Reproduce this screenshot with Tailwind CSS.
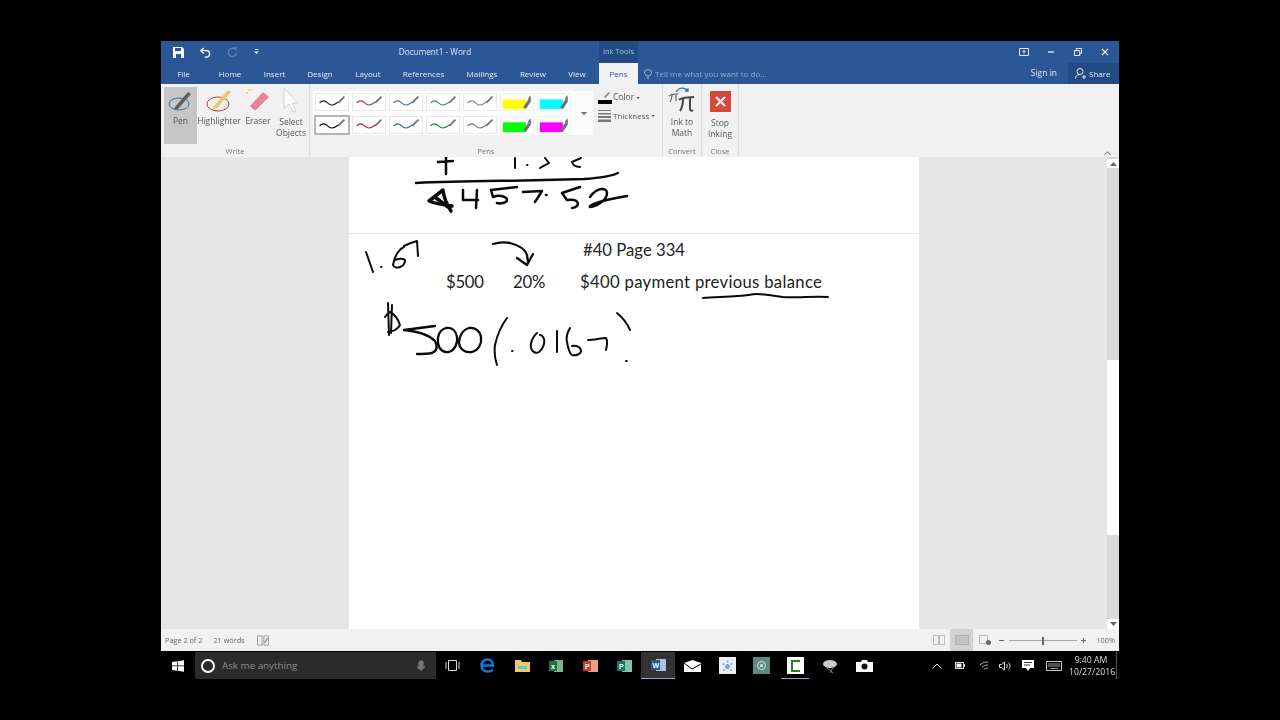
<!DOCTYPE html>
<html lang="en">
<head>
  <meta charset="UTF-8">
  <title>Document1 - Word</title>
  <script src="https://cdn.jsdelivr.net/npm/@tailwindcss/browser@4"></script>
</head>
<body class="bg-black overflow-hidden font-['Open_Sans',sans-serif]">
  <svg class="hidden">
    <symbol id="pen-line" viewBox="0 0 34 18">
      <path d="M3 10c3-3 6-3 9 0s6 3 9 1l3-2" fill="none" stroke="currentColor" stroke-width="1.3"/>
      <path d="M24 10l7-7" stroke="#707070" stroke-width="2" fill="none"/>
    </symbol>
    <symbol id="pen-marker" viewBox="0 0 34 18">
      <rect x="1" y="6" width="26" height="11" fill="currentColor"/>
      <path d="M24 15l6-9 3 2-6 9z" fill="#707070"/>
      <path d="M29 6l3-5 1 6z" fill="#707070"/>
    </symbol>
  </svg>

  <div class="w-[1280px] h-[720px] pl-[161px] pt-[41px]">
    <div class="w-[958px] blur-[0.3px]">

      <!-- title bar -->
      <div class="h-[22px] bg-[#2b5797] flex items-center text-[#dfe7f3] relative">
        <div class="flex items-center w-[110px] pl-[12px] gap-[16px]">
          <svg width="11" height="11" viewBox="0 0 11 11"><path d="M0 0h9l2 2v9H0z" fill="#fff"/><path d="M2 1h6v3H2zM3 7h5v4H3z" fill="#2b5797"/></svg>
          <svg width="11" height="11" viewBox="0 0 12 12" fill="none" stroke="#fff" stroke-width="1.5"><path d="M1 4h6a3.500 3.500 0 0 1 0 7H5"/><path d="M4 1L1 4l3 3"/></svg>
          <svg width="11" height="11" viewBox="0 0 12 12" fill="none" stroke="#5f83b8" stroke-width="1.4"><path d="M9 2.500a4.500 4.500 0 1 0 1.500 3.500"/><path d="M7 1h3v3"/></svg>
          <svg width="5" height="6" viewBox="0 0 6 7" fill="#dfe7f3"><path d="M1 0h4v1H1zM0 3h6L3 6z"/></svg>
        </div>
        <div class="ml-[94px] w-[140px] text-[8.2px] text-center">Document1 - Word</div>
        <div class="ml-[94px] w-[39px] h-[22px] bg-[#224a84] text-[7.5px] text-[#a9bcd8] flex items-center justify-center">Ink Tools</div>
        <div class="ml-auto flex items-center">
          <div class="w-[27px] flex justify-center"><svg width="10" height="8" viewBox="0 0 10 8" fill="none" stroke="#dfe7f3"><path d="M.5.5h9v7h-9z"/><path d="M5 6V2.500M3.500 4L5 2.500 6.500 4"/></svg></div>
          <div class="w-[27px] flex justify-center"><svg width="6" height="2"><path d="M0 1h6" stroke="#fff" stroke-width="1.2"/></svg></div>
          <div class="w-[27px] flex justify-center"><svg width="8" height="8" viewBox="0 0 9 9" fill="none" stroke="#fff"><path d="M.5 3h6v5.500h-6zM2.500 3V.5h6v5.500H6.500"/></svg></div>
          <div class="w-[28px] flex justify-center"><svg width="8" height="8" viewBox="0 0 9 9" stroke="#fff" stroke-width="1.5"><path d="M1 1l7 7M8 1L1 8"/></svg></div>
        </div>
      </div>

      <!-- tabs -->
      <div class="h-[21px] bg-[#2b5797] flex items-stretch text-[8px] text-[#e3eaf5]">
        <div class="w-[45px] flex items-center justify-center">File</div>
        <div class="w-[48px] flex items-center justify-center">Home</div>
        <div class="w-[41px] flex items-center justify-center">Insert</div>
        <div class="w-[50px] flex items-center justify-center">Design</div>
        <div class="w-[46px] flex items-center justify-center">Layout</div>
        <div class="w-[65px] flex items-center justify-center">References</div>
        <div class="w-[52px] flex items-center justify-center">Mailings</div>
        <div class="w-[50px] flex items-center justify-center">Review</div>
        <div class="w-[38px] flex items-center justify-center">View</div>
        <div class="w-[39px] ml-[3px] flex items-center justify-center bg-[#f1f1f1] text-[#2b5797]">Pens</div>
        <div class="flex items-center pl-[6px] text-[#8fa9d0] gap-[3px]">
          <svg width="8" height="10" viewBox="0 0 8 10" fill="none" stroke="#a9bcd8"><path d="M2.500 7C2 5.500.5 5 .5 3.500a3.500 3 0 0 1 7 0C7.500 5 6 5.500 5.500 7zM3 9h2"/></svg>
          <span>Tell me what you want to do...</span>
        </div>
        <div class="ml-auto flex items-center">
          <span class="mr-[11px] text-[8.5px]">Sign in</span>
          <div class="w-[51px] h-full bg-[#224a84] flex items-center pl-[7px] gap-[3px]">
            <svg width="11" height="11" viewBox="0 0 11 11" fill="none" stroke="#e3eaf5"><circle cx="5" cy="3.500" r="3"/><path d="M.5 10.500c0-2.500 2-4 4-4M7 9h4M9 7v4"/></svg>
            <span>Share</span>
          </div>
        </div>
      </div>

      <!-- ribbon -->
      <div class="h-[73px] bg-[#f1f1f1] flex text-[8.5px] text-[#555] relative">
        <!-- Write -->
        <div class="w-[149px] border-r border-[#dcdcdc] flex flex-col">
          <div class="flex h-[61px] pt-[3px] pl-[3px]">
            <div class="w-[33px] h-[57px] bg-[#c6c6c6] flex flex-col items-center">
              <svg width="28" height="24" viewBox="0 0 28 24" class="mt-[2px]" fill="none"><ellipse cx="12" cy="15" rx="10" ry="6" stroke="#3f6cb5"/><path d="M8 18L21 3l3 2-13 15-4 1z" fill="#5f5f5f"/></svg>
              <span class="mt-[2px]">Pen</span>
            </div>
            <div class="w-[44px] flex flex-col items-center">
              <svg width="28" height="26" viewBox="0 0 28 26" fill="none"><ellipse cx="13" cy="17" rx="11" ry="7" stroke="#c0392b"/><path d="M8 20L23 3l3 2-14 16-4 1z" fill="#ecc76f"/></svg>
              <span class="mt-[2px]">Highlighter</span>
            </div>
            <div class="w-[34px] flex flex-col items-center">
              <svg width="26" height="26" viewBox="0 0 26 26"><path d="M3 2l1 2M1 6h2M6 2v2" stroke="#e9b44c"/><path d="M5 19L18 5l6 5-13 13h-2z" fill="#e8829b"/></svg>
              <span class="mt-[2px]">Eraser</span>
            </div>
            <div class="w-[32px] flex flex-col items-center text-center leading-[11px]">
              <svg width="20" height="26" viewBox="0 0 20 26" fill="#fbfbfb" stroke="#c9c9c9" stroke-width=".8"><path d="M3 1l14 15h-6l4 8-3 1-4-8-5 4z"/></svg>
              <span class="mt-[3px]">Select Objects</span>
            </div>
          </div>
          <div class="text-center text-[7.5px] text-[#777] mt-[2px]">Write</div>
        </div>
        <!-- Pens -->
        <div class="w-[353px] border-r border-[#dcdcdc] flex flex-col">
          <div class="flex h-[61px] pt-[7px]">
            <div class="ml-[3px] w-[261px] h-[44px] bg-white grid grid-cols-[repeat(7,37px)] grid-rows-2 pl-[2px] pt-[2px] gap-y-[3px]">
              <div class="w-[34px] h-[18px] border border-[#e8e8e8] text-[#222]"><svg class="w-full h-full"><use href="#pen-line"/></svg></div>
              <div class="w-[34px] h-[18px] border border-[#e8e8e8] text-[#c8284d]"><svg class="w-full h-full"><use href="#pen-line"/></svg></div>
              <div class="w-[34px] h-[18px] border border-[#e8e8e8] text-[#4a70b8]"><svg class="w-full h-full"><use href="#pen-line"/></svg></div>
              <div class="w-[34px] h-[18px] border border-[#e8e8e8] text-[#2e9a50]"><svg class="w-full h-full"><use href="#pen-line"/></svg></div>
              <div class="w-[34px] h-[18px] border border-[#e8e8e8] text-[#888]"><svg class="w-full h-full"><use href="#pen-line"/></svg></div>
              <div class="w-[34px] h-[18px] border border-[#eeeeee] text-[#ffff00]"><svg class="w-full h-full"><use href="#pen-marker"/></svg></div>
              <div class="w-[34px] h-[18px] border border-[#eeeeee] text-[#00ffff]"><svg class="w-full h-full"><use href="#pen-marker"/></svg></div>
              <div class="w-[36px] h-[20px] -ml-[1px] -mt-[1px] border-2 border-[#b4b4b4] text-[#000]"><svg class="w-full h-full"><use href="#pen-line"/></svg></div>
              <div class="w-[34px] h-[18px] border border-[#e8e8e8] text-[#d01030]"><svg class="w-full h-full"><use href="#pen-line"/></svg></div>
              <div class="w-[34px] h-[18px] border border-[#e8e8e8] text-[#3060c0]"><svg class="w-full h-full"><use href="#pen-line"/></svg></div>
              <div class="w-[34px] h-[18px] border border-[#e8e8e8] text-[#108a40]"><svg class="w-full h-full"><use href="#pen-line"/></svg></div>
              <div class="w-[34px] h-[18px] border border-[#e8e8e8] text-[#777]"><svg class="w-full h-full"><use href="#pen-line"/></svg></div>
              <div class="w-[34px] h-[18px] border border-[#eeeeee] text-[#00ff00]"><svg class="w-full h-full"><use href="#pen-marker"/></svg></div>
              <div class="w-[34px] h-[18px] border border-[#eeeeee] text-[#ff00ff]"><svg class="w-full h-full"><use href="#pen-marker"/></svg></div>
            </div>
            <div class="w-[19px] h-[44px] bg-[#fbfbfb] flex items-center justify-center"><svg width="6" height="3"><path d="M0 0h6L3 3z" fill="#666"/></svg></div>
            <div class="ml-[5px] flex flex-col gap-[5px] text-[8.5px]">
              <div class="flex items-center h-[13px]">
                <svg width="14" height="13" viewBox="0 0 14 13"><path d="M6 6l5-5 1 1-5 5z" fill="#777"/><rect y="9" width="14" height="4" fill="#000"/></svg>
                <span class="ml-[1px]">Color</span><svg class="ml-[2px]" width="4" height="2"><path d="M0 0h4L2 2z" fill="#666"/></svg>
              </div>
              <div class="flex items-center h-[13px]">
                <svg width="13" height="13" viewBox="0 0 13 13" fill="#777"><rect y="1" width="13" height="1"/><rect y="4" width="13" height="1.5"/><rect y="7" width="13" height="2"/><rect y="10.500" width="13" height="2.500"/></svg>
                <span class="ml-[2px] text-[8px]">Thickness</span><svg class="ml-[2px]" width="4" height="2"><path d="M0 0h4L2 2z" fill="#666"/></svg>
              </div>
            </div>
          </div>
          <div class="text-center text-[7.5px] text-[#777] mt-[2px]">Pens</div>
        </div>
        <!-- Convert -->
        <div class="w-[39px] border-r border-[#dcdcdc] flex flex-col">
          <div class="h-[61px] flex flex-col items-center pt-[3px] text-center leading-[11px]">
            <svg width="28" height="26" viewBox="0 0 28 26" fill="none" stroke="#444"><path d="M1 9c2-2 6-2 9-2M4 8c0 3-1 5-2 7M8 8v6"/><path d="M11 13c3-3 8-2 15-3M15 12c0 5-1 9-3 12M22 11v11c0 2 2 2 3 1" stroke-width="2"/><path d="M8 5c3-5 9-5 12-1M20 1v3h-3" stroke="#3f6cb5" stroke-width="1.3"/></svg>
            <span class="mt-[3px]">Ink to Math</span>
          </div>
          <div class="text-center text-[7.5px] text-[#777] mt-[2px]">Convert</div>
        </div>
        <!-- Close -->
        <div class="w-[37px] border-r border-[#dcdcdc] flex flex-col">
          <div class="h-[61px] flex flex-col items-center pt-[7px] text-center leading-[11px]">
            <div class="w-[21px] h-[21px] bg-[#d24a3b] flex items-center justify-center">
              <svg width="11" height="11" viewBox="0 0 11 11" stroke="#fff" stroke-width="2"><path d="M1 1l9 9M10 1l-9 9"/></svg>
            </div>
            <span class="mt-[5px]">Stop Inking</span>
          </div>
          <div class="text-center text-[7.5px] text-[#777] mt-[2px]">Close</div>
        </div>
        <svg class="absolute right-[8px] bottom-[2px]" width="7" height="4" fill="none" stroke="#666"><path d="M.5 3.500L3.500 1l3 2.500"/></svg>
      </div>

      <!-- document area -->
      <div class="h-[472px] bg-[#e6e6e6] flex relative overflow-hidden">
        <div class="flex-1">
          <div class="w-[570px] ml-[188px] h-full bg-white font-['Lato',sans-serif] text-[16.7px] text-[#222]">
            <div class="h-[77px] border-b border-[#e8e8e8]"></div>
            <div class="pl-[234px] pt-[6px] leading-[20px]">#40 Page 334</div>
            <div class="flex pl-[97px] pt-[12px] leading-[20px]">
              <span class="w-[67px] tracking-[-.3px]">$500</span>
              <span class="w-[67px] tracking-[-.2px]">20%</span>
              <span class="tracking-[.3px]">$400 payment previous balance</span>
            </div>
          </div>
        </div>
        <!-- scrollbar -->
        <div class="w-[12px] bg-[#d9d9d9] flex flex-col justify-between relative pt-[2px]">
          <div class="h-[9px] bg-white flex items-center justify-center"><svg width="7" height="4"><path d="M0 4L3.500 0 7 4z" fill="#666"/></svg></div>
          <div class="absolute top-[203px] left-0 w-[12px] h-[175px] bg-white"></div>
          <div class="h-[10px] bg-white flex items-center justify-center"><svg width="7" height="4"><path d="M0 0L3.500 4 7 0z" fill="#666"/></svg></div>
        </div>
        <!-- handwriting -->
        <svg class="absolute left-0 top-0" width="958" height="472" viewBox="161 157 958 472" fill="none" stroke="#0a0a0a" stroke-width="2" stroke-linecap="round" stroke-linejoin="round">
          <!-- top sum -->
          <path stroke-width="2.5" d="M446 157v17M438 162l15-1"/>
          <path d="M515 158v10M527 165h.5M545 158l4 5-9 5M581 158l-9 4c1 3 4 5 8 5"/>
          <path stroke-width="2.5" d="M416 183c50-2 100-2 168-4 14-1 26-2 34-6"/>
          <!-- $457.52 -->
          <path stroke-width="3.5" d="M443 190l-14 11c7 3 15 4 23 5M443 191c1 6 4 14 8 20M436 198l12 9"/>
          <path stroke-width="2.5" d="M463 190v10h15M477 190l-1 18M517 187l-26 3 2 7c7-3 14 0 14 3 0 3-7 4-10 3M523 192l19-1-7 11M546 195h.5M580 187l-18 6 5 7c13-2 14 7 5 8M590 197c7-10 17-10 17-4 0 9-14 14-17 14-2-2 13-7 37-11"/>
          <!-- 1.67 -->
          <path d="M366 252l7 20M381 267h.5M404 247c-5 2-9 8-11 18 1 3 5 3 7 2 3-1 5-4 5-7-2-2-7-1-10 0M404 246c4-2 9-4 13-5l1 15"/>
          <!-- arrow -->
          <path stroke-width="2.3" d="M493 244c6-2 12-2 17-1 8 2 15 6 17 12l1 7M517 258l10 7 6-11"/>
          <!-- underline -->
          <path d="M703 298c12-1 24-1 34-2 8 0 14-2 20-2 9 0 17 2 26 3 15 1 30-1 45 0"/>
          <!-- $500(.0167) -->
          <path d="M388 303l1 32M392 305l-1 28M385 317c2-3 3-4 5-5 4 2 8 7 10 13-2 4-7 7-12 7"/>
          <path stroke-width="2.3" d="M435 326l-31 4c10 1 24 4 31 11 3 6 2 10-3 12-5 1-10 1-15 1"/>
          <path stroke-width="2.3" d="M446 328c-7 2-9 9-8 15 1 7 6 10 11 9 6-2 9-9 8-15-1-6-5-10-11-9zM469 328c-7 2-10 9-10 15 1 7 7 10 13 9 7-2 10-9 9-15-1-6-6-10-12-9z"/>
          <path d="M507 318c-6 8-10 18-12 27-1 7 0 14 2 20M512 351h.5M537 333c-4 3-7 10-6 15 1 4 5 6 8 4 4-3 6-9 5-13-1-3-3-4-4-4M557 331v21M570 328c-3 5-4 10-3 14 1 6 2 11 5 13 4 1 9-1 9-4 0-4-5-6-9-5M588 340c6 0 13-2 18-2 2 3 1 8 0 12M617 313c5 4 10 10 13 17M626 361h.8"/>
        </svg>
      </div>

      <!-- status bar -->
      <div class="h-[22px] bg-[#f1f1f1] flex items-center text-[7.3px] text-[#666]">
        <span class="ml-[4px]">Page 2 of 2</span>
        <span class="ml-[11px]">21 words</span>
        <svg class="ml-[12px]" width="12" height="11" viewBox="0 0 13 11" fill="none" stroke="#999"><path d="M.5.5h5v10h-5zM7.500.5h5v10h-5z"/><path d="M8.500 8l3-5" stroke="#444"/></svg>
        <div class="ml-auto flex items-center h-full">
          <div class="w-[23px] h-full flex items-center justify-center"><svg width="12" height="10" viewBox="0 0 12 10" fill="none" stroke="#bbb"><path d="M.5.5h5v9h-5zM6.500.5h5v9h-5z"/></svg></div>
          <div class="w-[23px] h-full bg-[#d2d2d2] flex items-center justify-center"><div class="w-[14px] h-[10px] bg-[#c2c2c2] border border-[#b0b0b0]"></div></div>
          <div class="w-[23px] h-full flex items-center justify-center"><svg width="12" height="10" viewBox="0 0 12 10" fill="none" stroke="#bbb"><path d="M.5.5h8v8h-8z"/><circle cx="9.500" cy="7.500" r="2.500" fill="#666" stroke="none"/></svg></div>
          <svg class="ml-[3px]" width="5" height="1"><path d="M0 .5h5" stroke="#666"/></svg>
          <div class="ml-[5px] w-[68px] h-[1px] bg-[#aaa] relative"><div class="absolute left-[33px] -top-[3px] w-[2px] h-[8px] bg-[#666]"></div></div>
          <svg class="ml-[4px]" width="5" height="5"><path d="M0 2.500h5M2.500 0v5" stroke="#666"/></svg>
          <span class="ml-[10px] mr-[4px]">100%</span>
        </div>
      </div>

      <!-- taskbar -->
      <div class="h-[30px] pt-[1px] bg-black flex items-start text-[#bbb]">
        <div class="w-[34px] h-[27px] flex items-center justify-center">
          <svg width="12" height="12" viewBox="0 0 12 12" fill="#fff"><path d="M0 2l5-.7v4.300H0zM5.700 1.200L12 .3v5.300H5.700zM0 6.300h5v4.400L0 10zM5.700 6.300H12v5.400l-6.300-.9z"/></svg>
        </div>
        <div class="w-[241px] h-[27px] bg-[#2b2b2b] flex items-center pl-[6px]">
          <div class="w-[14px] h-[14px] rounded-full border-2 border-white"></div>
          <span class="ml-[7px] mt-[1px] text-[9.8px] text-[#8d8d8d]">Ask me anything</span>
          <svg class="ml-auto mr-[11px]" width="8" height="12" viewBox="0 0 8 12" fill="none" stroke="#777" stroke-width="1.3"><rect x="2" y="1" width="4" height="7" rx="2" fill="#777"/><path d="M.7 6c0 4 6.600 4 6.600 0M4 9v2"/></svg>
        </div>
        <div class="flex items-center">
          <div class="w-[33px] h-[27px] flex items-center justify-center"><svg width="15" height="11" viewBox="0 0 15 11" fill="none" stroke="#ddd"><path d="M3.500.5h8v10h-8zM1 2v7M14 2v7"/></svg></div>
          <div class="w-[36px] h-[27px] flex items-center justify-center"><svg width="15" height="15" viewBox="0 0 15 15" fill="none" stroke="#0f7cd8" stroke-width="2.4"><path d="M2 7.500h11C13 3 10 1.500 7.500 1.500 4 1.500 1.500 4 1.500 7.500c0 4 3 6 6 6 2 0 4-.5 5.500-1.500"/></svg></div>
          <div class="w-[34px] h-[27px] flex items-center justify-center"><svg width="15" height="12" viewBox="0 0 15 12"><path d="M0 0h6l1 2h8v10H0z" fill="#f3c95b"/><path d="M3 6h9v3H3z" fill="#5cc6e8"/></svg></div>
          <div class="w-[34px] h-[27px] flex items-center justify-center"><svg width="14" height="14" viewBox="0 0 14 14"><rect x="5" y="1" width="9" height="12" fill="#7fb08f"/><rect y="2" width="8" height="10" fill="#1f7244"/><text x="2" y="10" font-size="7" font-family="Liberation Sans" font-weight="700" fill="#fff">x</text></svg></div>
          <div class="w-[34px] h-[27px] flex items-center justify-center"><svg width="15" height="14" viewBox="0 0 15 14"><rect x="5" y="1" width="10" height="12" fill="#eba08c"/><rect y="2" width="8" height="10" fill="#c8402a"/><text x="2" y="10" font-size="7" font-family="Liberation Sans" font-weight="700" fill="#fff">P</text></svg></div>
          <div class="w-[34px] h-[27px] flex items-center justify-center"><svg width="15" height="14" viewBox="0 0 15 14"><rect x="5" y="1" width="10" height="12" fill="#86c3b1"/><rect y="2" width="8" height="10" fill="#0f7b5f"/><text x="2" y="10" font-size="7" font-family="Liberation Sans" font-weight="700" fill="#fff">P</text></svg></div>
          <div class="w-[34px] h-[27px] bg-[#333] border-b border-[#7ea6d8] flex items-center justify-center"><svg width="15" height="14" viewBox="0 0 15 14"><rect x="5" y="1" width="10" height="12" fill="#a9c2e6"/><rect y="2" width="9" height="10" fill="#2b5797"/><text x="1.500" y="10" font-size="7" font-family="Liberation Sans" font-weight="700" fill="#fff">W</text></svg></div>
          <div class="w-[35px] h-[27px] flex items-center justify-center"><svg width="17" height="12" viewBox="0 0 17 12"><path d="M0 3l8.500-3L17 3v9H0z" fill="#fff"/><path d="M0 3l8 6 9-5" fill="none" stroke="#000"/></svg></div>
          <div class="w-[34px] h-[27px] flex items-center justify-center"><div class="w-[17px] h-[17px] bg-[#e8eef5] flex items-center justify-center"><svg width="11" height="11" viewBox="0 0 11 11" fill="#7aa4d6"><circle cx="5.500" cy="6.500" r="2.500"/><circle cx="5.500" cy="1.500" r="1"/><circle cx="1.500" cy="4" r="1"/><circle cx="9.500" cy="4" r="1"/><circle cx="2" cy="10" r="1"/><circle cx="9" cy="10" r="1"/></svg></div></div>
          <div class="w-[34px] h-[27px] flex items-center justify-center"><div class="w-[17px] h-[17px] bg-[#5d8a80] flex items-center justify-center"><div class="w-[9px] h-[9px] rounded-full border border-[#dfeae7] flex items-center justify-center"><div class="w-[3px] h-[3px] rounded-full bg-[#dfeae7]"></div></div></div></div>
          <div class="w-[34px] h-[27px] relative flex items-center justify-center"><div class="w-[17px] h-[17px] bg-white flex items-center justify-center"><svg width="9" height="12" viewBox="0 0 9 12" fill="none" stroke="#2e7d2e" stroke-width="2"><path d="M9 1H1v10h8"/></svg></div><div class="absolute bottom-0 left-[3px] w-[28px] h-[1px] bg-[#7ea6d8]"></div></div>
          <div class="w-[35px] h-[27px] flex items-center justify-center"><svg width="16" height="16" viewBox="0 0 16 16"><ellipse cx="8" cy="6" rx="7" ry="4" fill="#ccc"/><path d="M5 10l6 5M11 9l-3 6" stroke="#6a8caa"/></svg></div>
          <div class="w-[34px] h-[27px] flex items-center justify-center"><svg width="17" height="12" viewBox="0 0 17 12"><path d="M0 2h5l1-2h5l1 2h5v10H0z" fill="#fff"/><circle cx="8.500" cy="6.500" r="3" fill="#111"/></svg></div>
        </div>
        <div class="ml-auto h-[27px] flex items-center">
          <svg width="10" height="6" fill="none" stroke="#ddd"><path d="M.5 5.500L5 1l4.500 4.500"/></svg>
          <svg class="ml-[13px]" width="10" height="7" viewBox="0 0 10 7"><rect x=".5" y=".5" width="8" height="6" fill="none" stroke="#ddd"/><rect x="1.500" y="1.500" width="5" height="4" fill="#fff"/><rect x="9" y="2" width="1" height="3" fill="#ddd"/></svg>
          <svg class="ml-[14px]" width="10" height="9" viewBox="0 0 10 9" fill="none" stroke="#aaa"><path d="M1 4c2-2 4-3 8-3M3 6c2-1 3-2 6-2M5 8c1 0 2-1 4-1"/></svg>
          <svg class="ml-[10px]" width="12" height="10" viewBox="0 0 12 10" fill="none" stroke="#ddd"><path d="M.5 3.500h2L5.500 1v8l-3-2.500h-2zM7.500 3c1 1 1 3 0 4M9.500 1.500c2 2 2 5 0 7"/></svg>
          <svg class="ml-[11px]" width="12" height="11" viewBox="0 0 12 11"><path d="M0 0h12v8H8l-2 3-2-3H0z" fill="#fff"/><path d="M2 2.500h8M2 5h6" stroke="#333"/></svg>
          <svg class="ml-[12px]" width="16" height="10" viewBox="0 0 16 10" fill="none" stroke="#ccc"><path d="M.5.5h15v9H.5z"/><path d="M2 3h12M2 5h12M4 7.500h8" stroke-width=".8"/></svg>
          <div class="ml-[7px] w-[44px] text-[8.7px] text-center text-[#ddd] leading-[12px] whitespace-nowrap">9:40 AM<br>10/27/2016</div>
          <div class="w-[1px] h-[27px] bg-[#555] ml-[3px] mr-[2px]"></div>
        </div>
      </div>
    </div>
  </div>
</body>
</html>
